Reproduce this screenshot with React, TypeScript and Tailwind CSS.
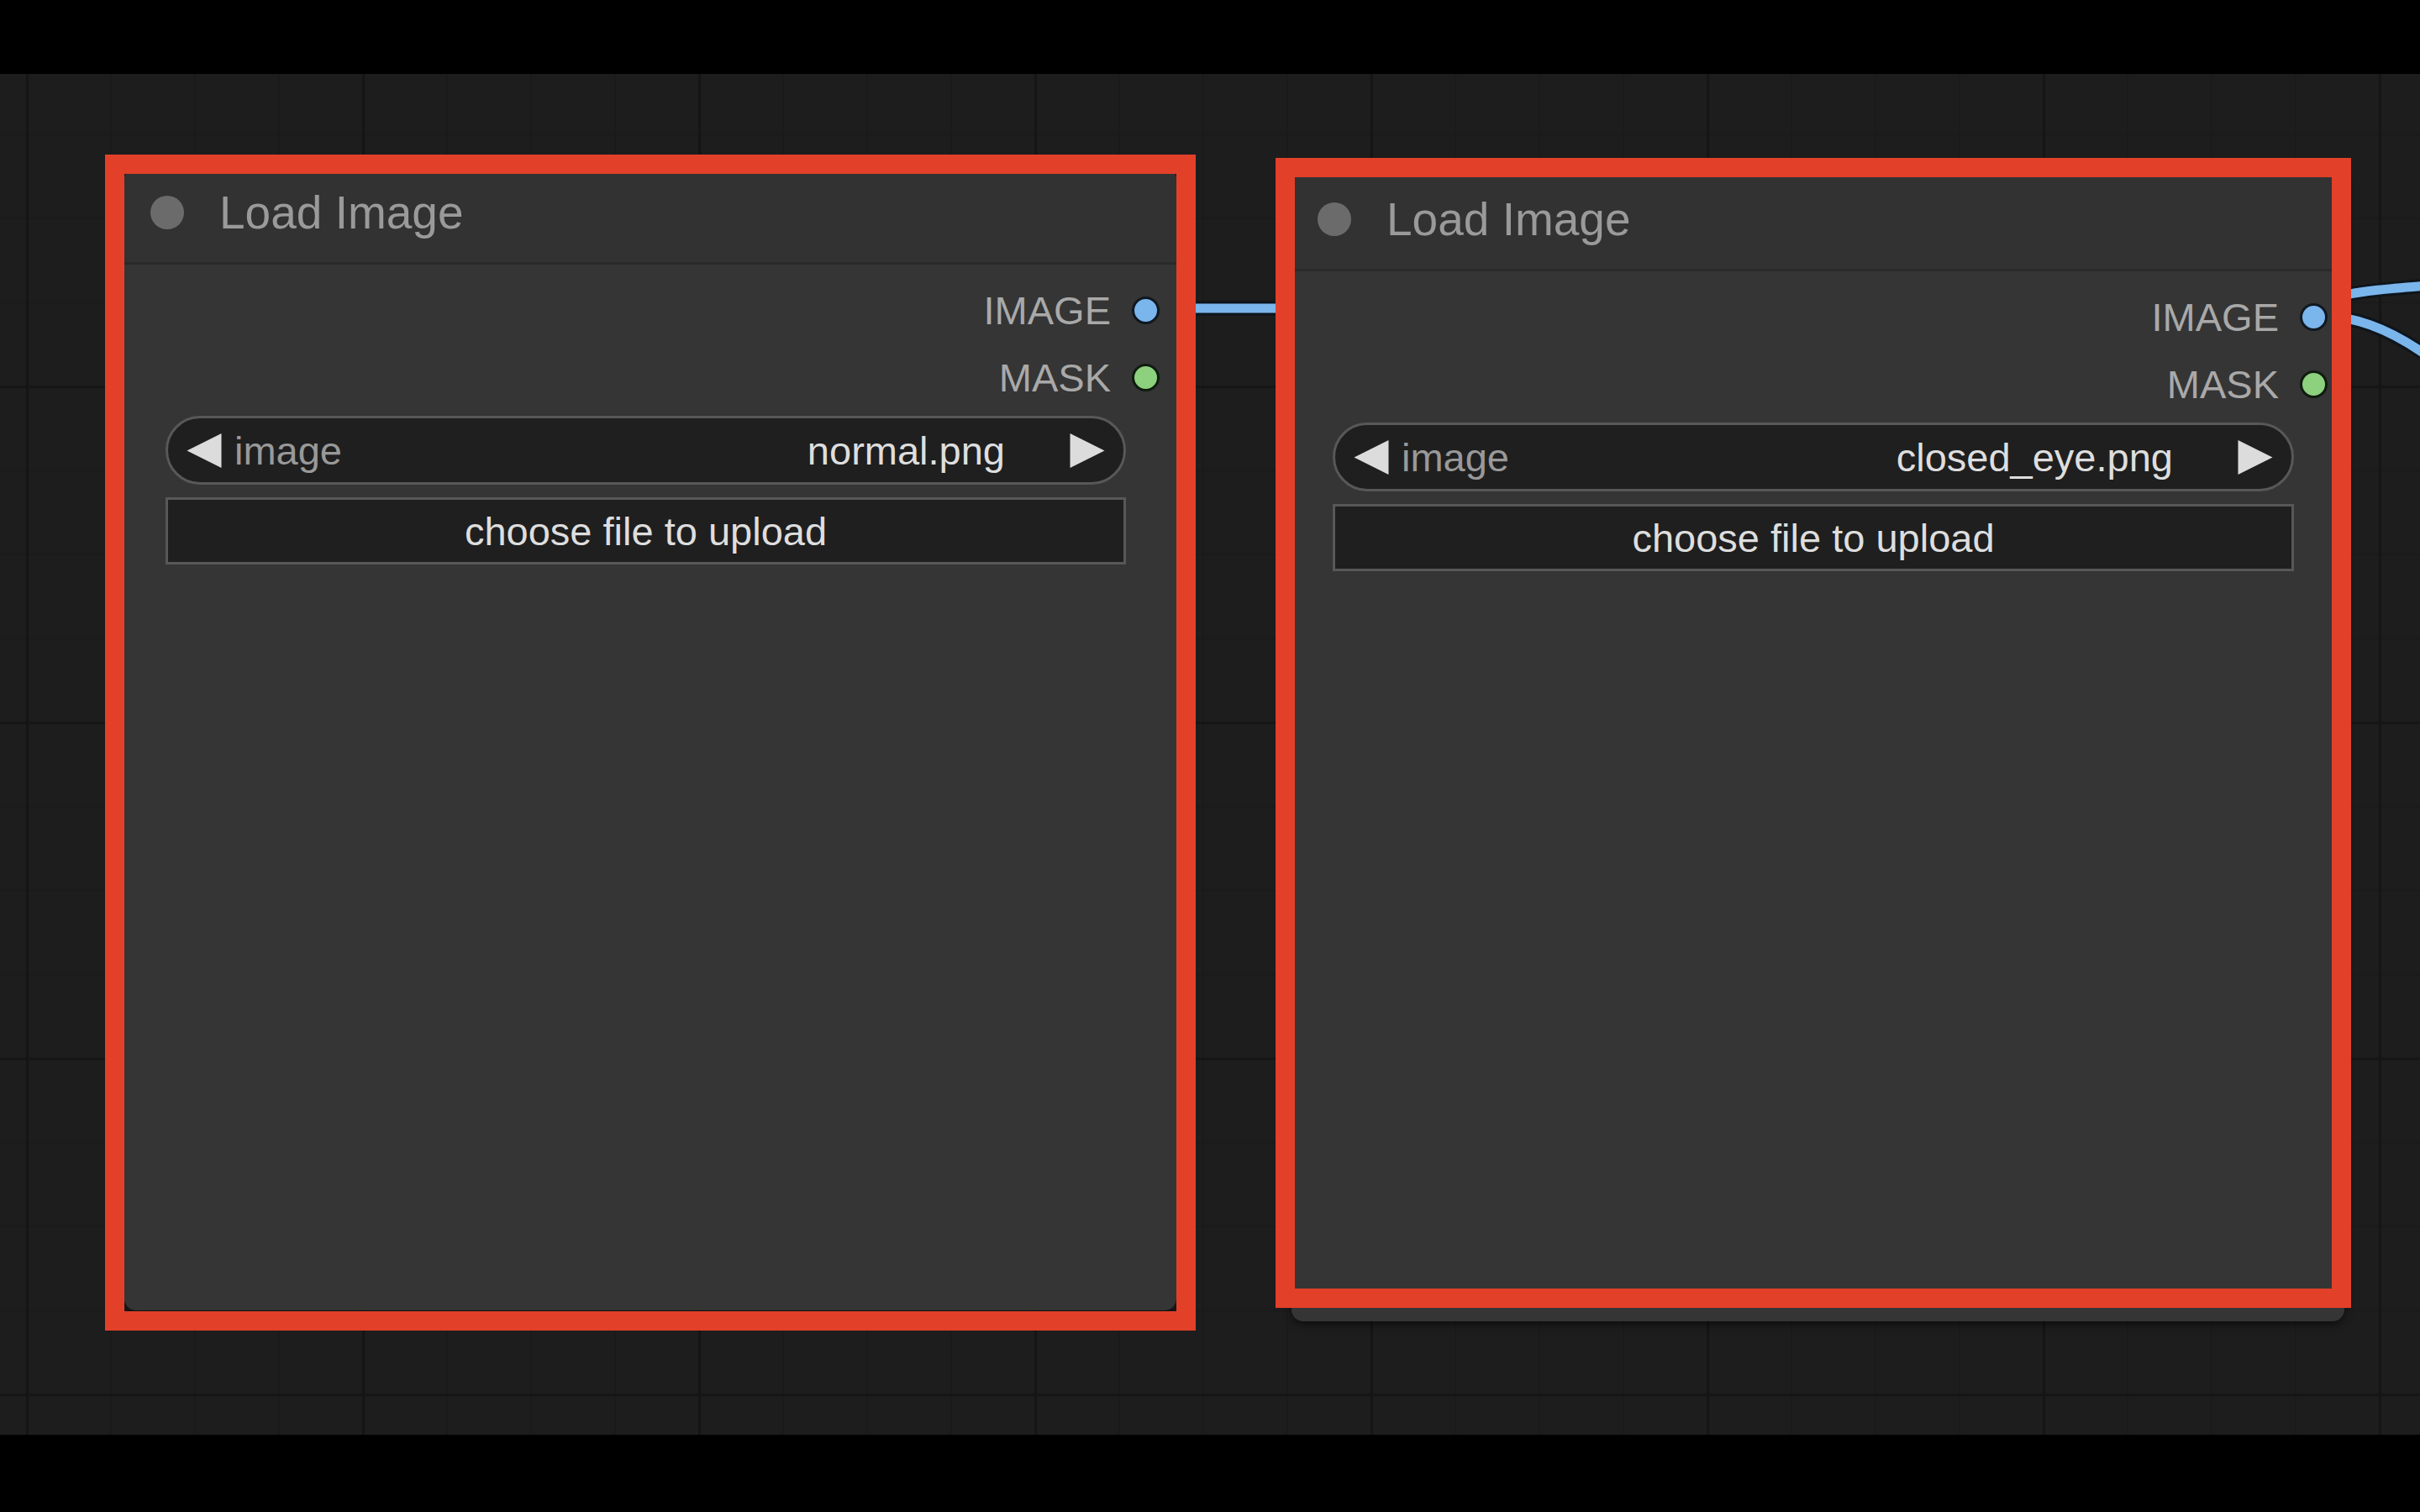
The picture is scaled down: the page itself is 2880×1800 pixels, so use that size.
import React from "react";

const FONT = { fontFamily: '"Liberation Sans", Arial, sans-serif' };

function Dot({ color }: { color: "blue" | "green" }) {
  return (
    <div
      className={
        color === "blue"
          ? "w-[33px] h-[33px] rounded-full border-[3px] border-[#101820] bg-[#7ab5ec]"
          : "w-[33px] h-[33px] rounded-full border-[3px] border-[#0f1c0f] bg-[#8dd07e]"
      }
    />
  );
}

function LoadImageNode({ value, className }: { value: string; className: string }) {
  return (
    <div className={className} style={FONT}>
      <div className="flex h-[115px] items-center border-b-[3px] border-[#2a2a2a] bg-[#323232] pb-[6px] pl-[31px]">
        <div className="h-[40px] w-[40px] rounded-full bg-[#6b6b6b]" />
        <span className="ml-[42px] text-[55px] leading-none text-[#9a9a9a]">Load Image</span>
      </div>
      <div className="flex flex-col pt-[14px]">
        <div className="flex h-[80px] items-center justify-end gap-[25px] pr-[20px]">
          <span className="text-[47px] leading-none text-[#a9a9a9]">IMAGE</span>
          <Dot color="blue" />
        </div>
        <div className="flex h-[80px] items-center justify-end gap-[25px] pr-[20px]">
          <span className="text-[47px] leading-none text-[#a9a9a9]">MASK</span>
          <Dot color="green" />
        </div>
      </div>
      <div className="flex flex-col gap-[15px] pl-[49px] pr-[60px] pt-[6px]">
        <div className="flex h-[82px] items-center rounded-full border-[3px] border-[#585858] bg-[#1f1f1f] px-[22px]">
          <svg viewBox="0 0 40 40" className="h-[41px] w-[42px] shrink-0">
            <polygon points="40,0 40,40 0,20" fill="#dcdcdc" />
          </svg>
          <span className="ml-[15px] text-[47px] leading-none text-[#999999]">image</span>
          <span className="flex-1" />
          <span className="mr-[77px] text-[47px] leading-none text-[#dedede]">{value}</span>
          <svg viewBox="0 0 40 40" className="h-[41px] w-[42px] shrink-0">
            <polygon points="0,0 0,40 40,20" fill="#dcdcdc" />
          </svg>
        </div>
        <div className="flex h-[80px] items-center justify-center border-[3px] border-[#585858] bg-[#1f1f1f]">
          <span className="text-[47px] leading-none text-[#dedede]">choose file to upload</span>
        </div>
      </div>
    </div>
  );
}

export default function App() {
  return (
    <div className="flex h-[1800px] w-[2880px] flex-col bg-black">
      <div className="h-[88px] bg-black" />
      <div className="relative h-[1620px] overflow-hidden bg-[#1d1d1d] bg-[linear-gradient(to_right,#151515_3px,transparent_3px),linear-gradient(to_bottom,#151515_3px,transparent_3px),linear-gradient(to_right,#1a1a1a_2px,transparent_2px),linear-gradient(to_bottom,#1a1a1a_2px,transparent_2px)] bg-[length:400px_400px,400px_400px,100px_100px,100px_100px] bg-[position:31px_371px,31px_371px,31px_71px,31px_71px]">
        <svg className="absolute left-0 top-0 h-[1620px] w-[2880px]" viewBox="0 0 2880 1620">
          <g fill="none" strokeLinecap="round">
            <path d="M1364 279 L1620 279" stroke="#0e151c" strokeWidth="17" />
            <path d="M1364 279 L1620 279" stroke="#7ab5ec" strokeWidth="11" />
            <path d="M2752 287 C2775 262, 2790 260, 2890 252" stroke="#0e151c" strokeWidth="17" />
            <path d="M2752 287 C2775 262, 2790 260, 2890 252" stroke="#7ab5ec" strokeWidth="11" />
            <path d="M2752 287 C2800 288, 2840 300, 2895 340" stroke="#0e151c" strokeWidth="17" />
            <path d="M2752 287 C2800 288, 2840 300, 2895 340" stroke="#7ab5ec" strokeWidth="11" />
          </g>
        </svg>

        <LoadImageNode
          value="normal.png"
          className="absolute left-[148px] top-[112px] h-[1360px] w-[1252px] overflow-hidden rounded-[14px] bg-[#353535] shadow-[0_4px_10px_rgba(0,0,0,0.5)]"
        />
        <LoadImageNode
          value="closed_eye.png"
          className="absolute left-[1537px] top-[120px] h-[1365px] w-[1253px] overflow-hidden rounded-[14px] bg-[#353535] shadow-[0_4px_10px_rgba(0,0,0,0.5)]"
        />

        <div className="pointer-events-none absolute left-[125px] top-[96px] h-[1400px] w-[1298px] border-[23px] border-[#e3402a]" />
        <div className="pointer-events-none absolute left-[1518px] top-[100px] h-[1369px] w-[1280px] border-[23px] border-[#e3402a]" />
      </div>
      <div className="h-[92px] bg-black" />
    </div>
  );
}
